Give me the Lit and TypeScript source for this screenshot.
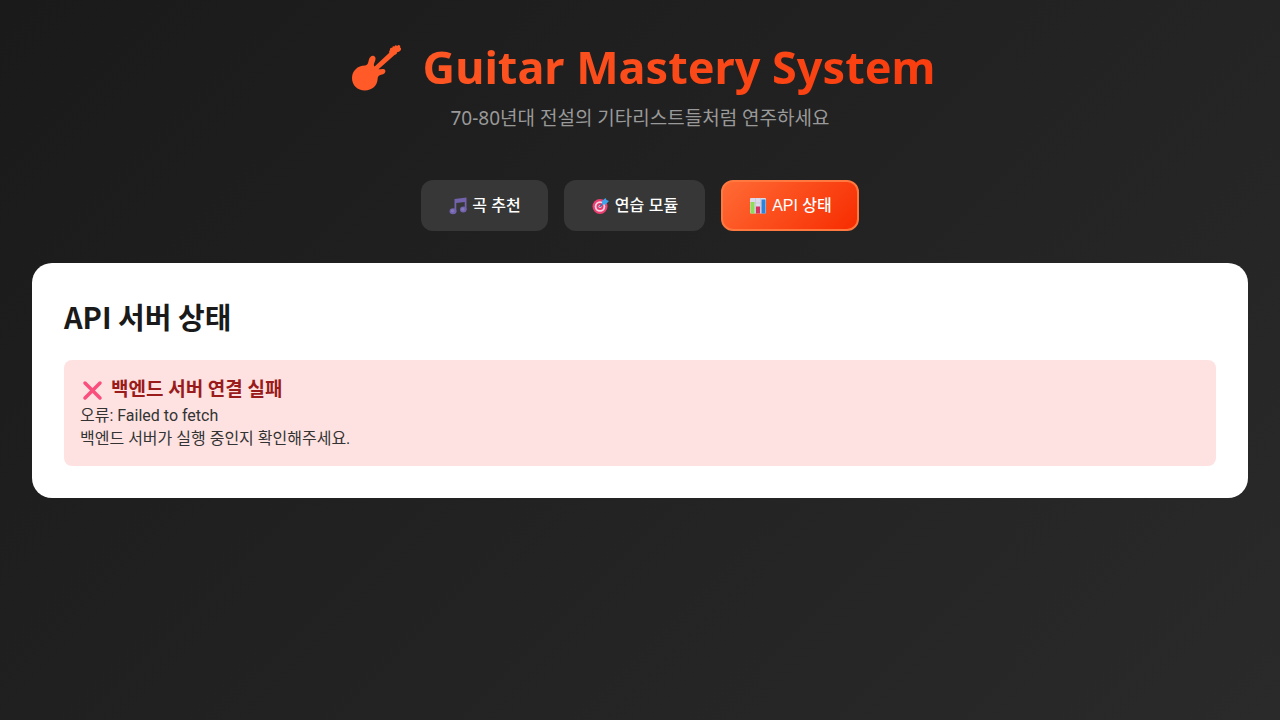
import { LitElement, html, css, svg } from "lit";
import { customElement, state } from "lit/decorators.js";

const guitarIcon = html`<svg class="guitar" viewBox="-6 -1 60 48" aria-hidden="true">
  <path
    d="M14 21.500 C6.500 21.500 1 27 1 34 C1 41.500 6.500 46.500 13.800 46.500 C21 46.500 26.500 41.500 26.600 35 C26.700 32 28.500 31 31 30.500 C34 30 35 27.500 34 25.800 C33 24.300 29.500 25.300 27.500 25.300 L43.500 11 C45.300 10.500 46 9.500 46.300 8 C48.500 8.300 50.500 6 50 4.300 C49 3.500 49 3 49.300 2 C48 .5 46.800 1 46.300 2 C45 .8 44 1 43.500 2.500 C42 1.800 41.300 2.500 41.200 4 C39.500 3.500 39 4.500 39 6 C38 7 38 8 38.300 8.800 L23.600 22.500 C22.500 21.500 22.800 20 23.500 18.500 C25 15.500 25 13 23 12 C20.800 11 18.500 13 17.800 16 C17.200 18.500 17 21 14 21.500 Z"
  />
</svg>`;

const icons = {
  music: svg`<g fill="#7362ac"><path d="M5.500 2 L17.500 0.500 V12.500 H15.700 V5 L7.300 6 V14.500 H5.500 Z"/><ellipse cx="4" cy="14.200" rx="3.500" ry="3"/><ellipse cx="14.300" cy="12.500" rx="3.300" ry="3"/></g><circle cx="3.500" cy="13.800" r="1.600" fill="#8577bd"/><circle cx="13.800" cy="12.200" r="1.600" fill="#8577bd"/>`,
  target: svg`<circle cx="8" cy="9.500" r="7.500" fill="#ef3e71"/><circle cx="8" cy="9.500" r="5.300" fill="#f6d6e4"/><circle cx="8" cy="9.500" r="3.500" fill="#e83a6c"/><circle cx="8" cy="9.500" r="1.500" fill="#f6d6e4"/><path d="M7.500 10 L12 5.500" stroke="#3a6fa8" stroke-width="1.400"/><path d="M10 4 L13.500 1 L14.500 3 L17 4 L13.500 7.500 L10 7.500 Z" fill="#3fa4ea"/>`,
  chart: svg`<rect x="1" y="1" width="16" height="15.500" rx="1" fill="#ddd9e8"/><path d="M1 6 H17 M1 11 H17 M6.500 1 V16 M11.500 1 V16" stroke="#c3bfd1" stroke-width=".6"/><rect x="1.500" y="5" width="4" height="11.500" fill="#8fdd55"/><rect x="7" y="9.500" width="4" height="7" fill="#d8305f"/><rect x="12.500" y="2.500" width="4" height="14" fill="#2b83dc"/>`,
};

type Tab = { id: keyof typeof icons; label: string };

const tabs: Tab[] = [
  { id: "music", label: "곡 추천" },
  { id: "target", label: "연습 모듈" },
  { id: "chart", label: "API 상태" },
];

@customElement("app-root")
export class AppRoot extends LitElement {
  @state() private active = "chart";

  static styles = css`
    :host {
      display: block;
      box-sizing: border-box;
      min-height: 100vh;
      padding: 32px;
      background: linear-gradient(135deg, #1a1a1a 0%, #2a2a2a 100%);
      font-family: "Noto Sans CJK KR", "Noto Sans", sans-serif;
      color: #333;
    }
    * {
      box-sizing: border-box;
      margin: 0;
    }
    .header {
      text-align: center;
      margin-bottom: 46px;
      font-family: "Noto Sans", "Noto Sans CJK KR", sans-serif;
    }
    .title {
      display: flex;
      justify-content: center;
      align-items: center;
      gap: 18px;
      font-size: 45px;
      line-height: 70px;
      font-weight: 700;
      background: linear-gradient(135deg, #ff6b35, #f72c00);
      background-clip: text;
      -webkit-background-clip: text;
      color: transparent;
    }
    .guitar {
      width: 60px;
      height: 48px;
      fill: #ff5a27;
    }
    .subtitle {
      font-size: 19px;
      line-height: 32px;
      font-weight: 400;
      color: #999;
    }
    .tabs {
      display: flex;
      justify-content: center;
      gap: 16px;
      margin-bottom: 32px;
    }
    .tab {
      display: flex;
      align-items: center;
      gap: 5px;
      padding: 12px 25px 12px 26px;
      border: 2px solid transparent;
      border-radius: 12px;
      background: #373737;
      color: #fff;
      font-family: "Liberation Sans", "Noto Sans CJK KR", sans-serif;
      font-size: 16px;
      line-height: 23px;
      font-weight: 500;
      cursor: pointer;
    }
    .tab.active {
      background: linear-gradient(135deg, #ff6b35, #f72c00);
      border-color: #ff7840;
    }
    .tab svg {
      width: 18px;
      height: 18px;
    }
    .card {
      padding: 32px;
      border-radius: 20px;
      background: #fff;
    }
    .heading {
      margin-bottom: 23px;
      font-size: 29px;
      line-height: 42px;
      font-weight: 700;
      color: #1a1a1a;
    }
    .alert {
      padding: 16px;
      border-radius: 8px;
      background: #fee2e2;
      font-family: "Roboto", "Noto Sans CJK KR", sans-serif;
      font-size: 16px;
      line-height: 23px;
    }
    .alert-title {
      display: flex;
      align-items: center;
      gap: 6px;
      font-size: 19px;
      line-height: 28px;
      font-weight: 700;
      color: #991b1b;
    }
    .cross {
      width: 25px;
      height: 22px;
    }
  `;

  render() {
    return html`
      <header class="header">
        <h1 class="title">${guitarIcon}<span>Guitar Mastery System</span></h1>
        <p class="subtitle">70-80년대 전설의 기타리스트들처럼 연주하세요</p>
      </header>
      <nav class="tabs">
        ${tabs.map(
          (tab) => html`<button
            type="button"
            class="tab ${tab.id === this.active ? "active" : ""}"
            @click=${() => (this.active = tab.id)}
          >
            <svg viewBox="0 0 18 18" aria-hidden="true">${icons[tab.id]}</svg>
            <span>${tab.label}</span>
          </button>`
        )}
      </nav>
      <main class="card">
        <h2 class="heading">API 서버 상태</h2>
        <section class="alert" role="alert">
          <h3 class="alert-title">
            <svg class="cross" viewBox="0 0 25 22" aria-hidden="true">
              <path d="M5 4 L20 19 M20 4 L5 19" stroke="#fa4e7d" stroke-width="3.500" stroke-linecap="round" />
            </svg>
            <span>백엔드 서버 연결 실패</span>
          </h3>
          <p>오류: Failed to fetch</p>
          <p>백엔드 서버가 실행 중인지 확인해주세요.</p>
        </section>
      </main>
    `;
  }
}
